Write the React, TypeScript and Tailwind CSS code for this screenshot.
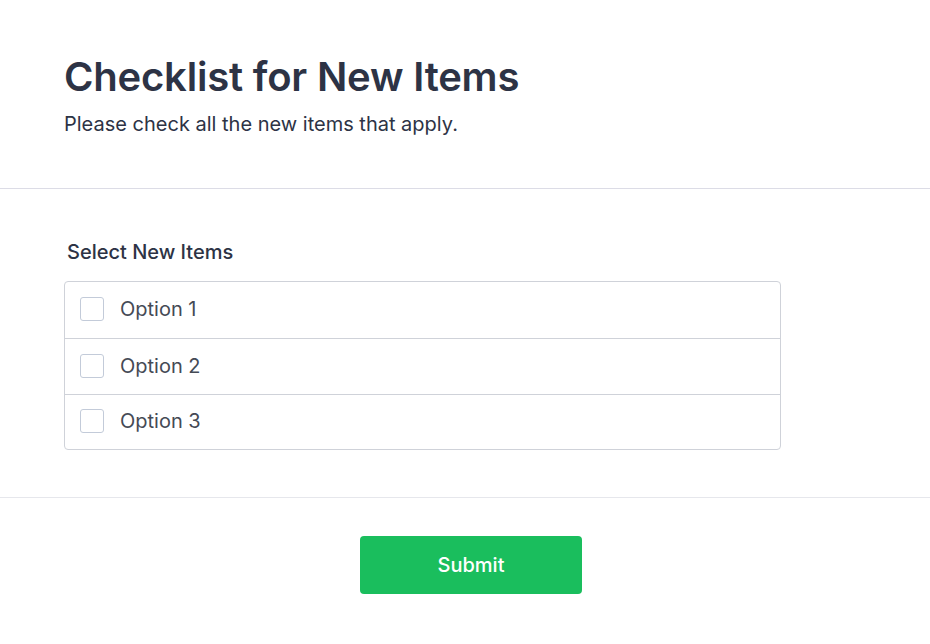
import { useState } from "react";

const options = [
  { label: "Option 1", height: "h-[56px]" },
  { label: "Option 2", height: "h-[56px]" },
  { label: "Option 3", height: "h-[55px]" },
];

export default function App() {
  const [checked, setChecked] = useState<Record<string, boolean>>({});

  return (
    <div className="min-h-screen bg-white text-[#2d3345]" style={{ fontFamily: "Inter, 'Noto Sans', sans-serif" }}>
      {/* Header */}
      <div className="px-16 pt-[53px] pb-[50px] border-b border-[#dcdce6]">
        <h1 className="text-[40px] leading-[48px] font-semibold tracking-[-0.2px]">Checklist for New Items</h1>
        <p className="mt-[9px] text-[20px] leading-[28px] text-[#2d3345]">Please check all the new items that apply.</p>
      </div>

      {/* Options */}
      <div className="px-16 pt-[49px] pb-[47px] border-b border-[#e6e7ec]">
        <div className="w-[717px]">
          <div className="pl-[3px] mb-[15px] text-[20px] leading-[28px] font-medium">Select New Items</div>
          <div className="rounded-[4px] border border-[#cfd2d9]">
            {options.map((opt, idx) => (
              <label
                key={opt.label}
                className={`flex items-center ${opt.height} pb-[2px] px-[15px] cursor-pointer ${idx > 0 ? "border-t border-[#cfd2d9]" : ""}`}
              >
                <input
                  type="checkbox"
                  className="sr-only"
                  checked={!!checked[opt.label]}
                  onChange={() => setChecked({ ...checked, [opt.label]: !checked[opt.label] })}
                />
                <span
                  className={`w-[24px] h-[24px] rounded-[3px] border ${checked[opt.label] ? "bg-[#1abe5d] border-[#1abe5d]" : "border-[#c3cbd9] bg-white"}`}
                />
                <span className="ml-[16px] text-[20px] text-[#454a55]">{opt.label}</span>
              </label>
            ))}
          </div>
        </div>
      </div>

      {/* Footer */}
      <div className="flex justify-center pl-[12px] pt-[38px] pb-[40px]">
        <button className="w-[222px] h-[58px] rounded-[4px] bg-[#1abe5d] text-white text-[20px] font-medium">
          Submit
        </button>
      </div>
    </div>
  );
}
